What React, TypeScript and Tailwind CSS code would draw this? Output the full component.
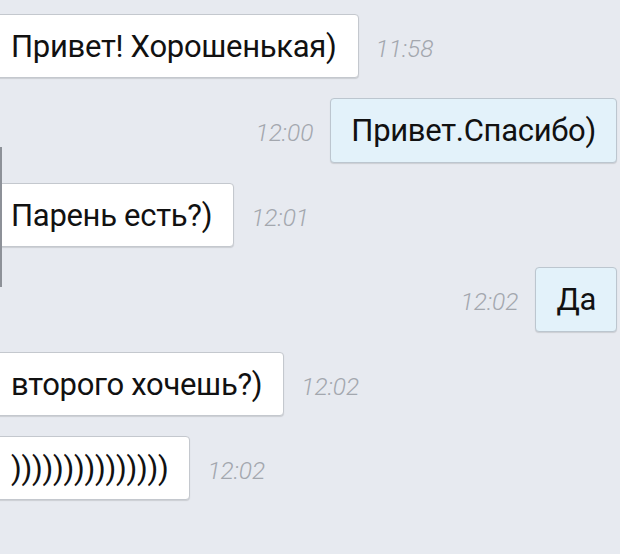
import React from "react";

type Msg = { text: string; time: string; out?: boolean };

const msgs: Msg[] = [
  { text: "Привет! Хорошенькая)", time: "11:58" },
  { text: "Привет.Спасибо)", time: "12:00", out: true },
  { text: "Парень есть?)", time: "12:01" },
  { text: "Да", time: "12:02", out: true },
  { text: "второго хочешь?)", time: "12:02" },
  { text: ")))))))))))))))", time: "12:02" },
];

function Time({ t }: { t: string }) {
  return (
    <span
      className="text-[24.5px] italic font-light text-[#a3a7ae] leading-none mt-[6px]"
      style={{ fontFamily: "Roboto, 'Noto Sans', sans-serif" }}
    >
      {t}
    </span>
  );
}

export default function App() {
  return (
    <div
      className="relative w-[620px] h-[554px] overflow-hidden bg-[#e7eaf0] pt-[14px] flex flex-col gap-[20px]"
      style={{ fontFamily: "Roboto, 'Noto Sans', sans-serif" }}
    >
      <div className="absolute left-0 top-[147px] w-[2px] h-[140px] bg-[#8d9198]" />
      {msgs.map((m, i) =>
        m.out ? (
          <div key={i} className="flex items-center justify-end gap-[17px] pr-[3px] h-[65px]">
            <Time t={m.time} />
            <div className="h-[65px] flex items-center pl-[20px] pr-[20px] bg-[#e3f2fa] border border-[#bcc6cf] rounded-[4px] shadow-[0_1px_1px_rgba(0,0,0,0.12)]">
              <span className="text-[31px] text-[#111] leading-none tracking-[-0.3px]">{m.text}</span>
            </div>
          </div>
        ) : (
          <div key={i} className="flex items-center gap-[17px] ml-[-8px] h-[64px]">
            <div className="h-[64px] flex items-center pl-[18px] pr-[21px] bg-white border border-[#c4c8ce] rounded-[4px] shadow-[0_1px_1px_rgba(0,0,0,0.12)]">
              <span className="text-[31px] text-[#111] leading-none tracking-[-0.3px]">{m.text}</span>
            </div>
            <Time t={m.time} />
          </div>
        )
      )}
    </div>
  );
}
